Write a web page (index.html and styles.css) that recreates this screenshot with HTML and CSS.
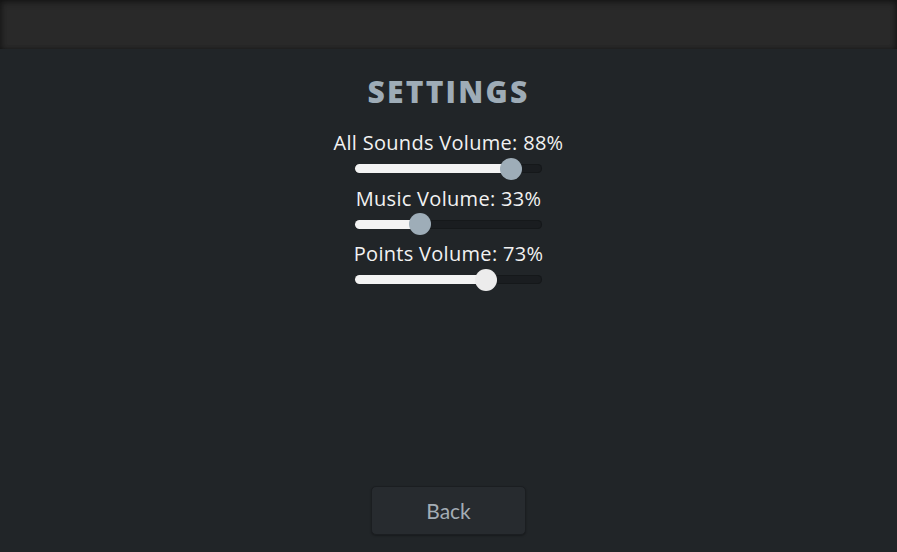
FILE: index.html
```html
<!DOCTYPE html>
<html>
<head>
<meta charset="utf-8">
<link rel="stylesheet" href="styles.css">
</head>
<body>
<header class="topbar"></header>
<main class="settings">
  <h1 class="title">SETTINGS</h1>
  <div class="control">
    <div class="label">All Sounds Volume: 88%</div>
    <div class="slider"><div class="fill" style="width:156px"></div><div class="thumb" style="left:145px"></div></div>
  </div>
  <div class="control">
    <div class="label">Music Volume: 33%</div>
    <div class="slider"><div class="fill" style="width:65px"></div><div class="thumb" style="left:54px"></div></div>
  </div>
  <div class="control">
    <div class="label">Points Volume: 73%</div>
    <div class="slider"><div class="fill" style="width:131px"></div><div class="thumb thumb-active" style="left:120px"></div></div>
  </div>
  <div class="spacer"></div>
  <button class="back">Back</button>
</main>
</body>
</html>
```
FILE: styles.css
```css
html, body {
  margin: 0;
  padding: 0;
  height: 100%;
}
body {
  background: #212528;
  font-family: "Open Sans", Lato, sans-serif;
  display: flex;
  flex-direction: column;
  overflow: hidden;
}
.topbar {
  height: 49px;
  flex: none;
  background: #292929;
  box-shadow: inset 0 3px 6px rgba(0,0,0,0.35), inset 3px 0 4px rgba(0,0,0,0.2), inset -3px 0 4px rgba(0,0,0,0.2);
}
.settings {
  flex: 1;
  display: flex;
  flex-direction: column;
  align-items: center;
  padding-top: 25px;
  padding-bottom: 17px;
}
.title {
  margin: 0;
  font-size: 30px;
  line-height: 36px;
  font-weight: 800;
  letter-spacing: 2.2px;
  color: #9eacb7;
}
.control {
  display: flex;
  flex-direction: column;
  align-items: center;
}
.label {
  color: #f2f2f2;
  font-size: 20px;
  line-height: 24px;
  letter-spacing: 0.3px;
  margin-top: 13.5px;
}
.control:first-of-type .label { margin-top: 21px; }
.slider {
  position: relative;
  width: 187px;
  height: 9px;
  margin-top: 9px;
  border-radius: 5px;
  background: #1a1d20;
  box-shadow: inset 0 0 0 1px #15181a;
}
.fill {
  height: 100%;
  border-radius: 5px;
  background: #f3f3f3;
}
.thumb {
  position: absolute;
  top: -6.5px;
  width: 22px;
  height: 22px;
  border-radius: 50%;
  background: #9eadb8;
}
.thumb-active { background: #ececec; }
.spacer { flex: 1; }
.back {
  width: 155px;
  height: 49px;
  background: #272b2f;
  border: 1px solid #1b1e21;
  border-radius: 5px;
  box-shadow: 0 1px 2px rgba(0,0,0,0.3);
  color: #a3adb5;
  font-family: Lato, "Open Sans", sans-serif;
  font-size: 21px;
}
```
